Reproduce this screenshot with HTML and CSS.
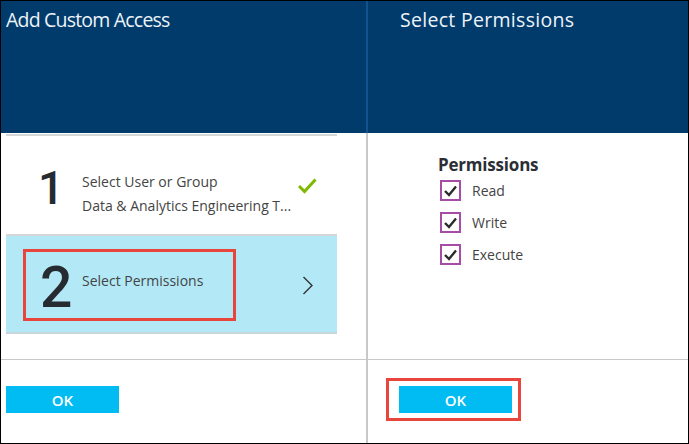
FILE: index.html
```html
<!DOCTYPE html>
<html>
<head>
<meta charset="utf-8">
<link rel="stylesheet" href="styles.css">
</head>
<body>
<div class="frame">
  <section class="panel panel-left">
    <header class="header header-left">Add Custom Access</header>
    <div class="body body-left">
      <div class="step step-1">
        <div class="num num-1">1</div>
        <div class="step-text">
          <div class="line">Select User or Group</div>
          <div class="line">Data &amp; Analytics Engineering T...</div>
        </div>
        <svg class="check" width="20" height="16" viewBox="0 0 20 16"><polyline points="1,8 6.5,13.5 17.5,1.5" fill="none" stroke="#7fba00" stroke-width="3"/></svg>
      </div>
      <div class="step step-2">
        <div class="num num-2">2</div>
        <div class="step-text">
          <div class="line">Select Permissions</div>
        </div>
        <svg class="chev" width="12" height="20" viewBox="0 0 12 20"><polyline points="1.5,1 10,9.5 1.5,18" fill="none" stroke="#333" stroke-width="1.4"/></svg>
        <div class="annot annot-step"></div>
      </div>
    </div>
    <footer class="footer footer-left">
      <button class="ok">OK</button>
    </footer>
  </section>
  <section class="panel panel-right">
    <header class="header header-right">Select Permissions</header>
    <div class="body body-right">
      <div class="perm-title">Permissions</div>
      <label class="perm"><span class="box"><svg width="17" height="17" viewBox="0 0 17 17"><polyline points="3,9 7,13 14,4.5" fill="none" stroke="#2b2b2b" stroke-width="2.4"/></svg></span>Read</label>
      <label class="perm"><span class="box"><svg width="17" height="17" viewBox="0 0 17 17"><polyline points="3,9 7,13 14,4.5" fill="none" stroke="#2b2b2b" stroke-width="2.4"/></svg></span>Write</label>
      <label class="perm"><span class="box"><svg width="17" height="17" viewBox="0 0 17 17"><polyline points="3,9 7,13 14,4.5" fill="none" stroke="#2b2b2b" stroke-width="2.4"/></svg></span>Execute</label>
    </div>
    <footer class="footer footer-right">
      <div class="annot-ok"><button class="ok">OK</button></div>
    </footer>
  </section>
</div>
</body>
</html>
```
FILE: styles.css
```css
* { box-sizing: border-box; }
html, body { margin: 0; padding: 0; background: #fff; }
body { font-family: "Open Sans", "Noto Sans", sans-serif; }

.frame {
  width: 689px;
  height: 444px;
  border: 1px solid #000;
  display: flex;
  overflow: hidden;
}

.panel { display: flex; flex-direction: column; }
.panel-left { width: 367px; }
.panel-right { flex: 1; }

.header {
  height: 132px;
  background: #003b6c;
  color: #eef3f8;
  font-size: 19.5px;
  line-height: 1;
  padding-top: 9px;
}
.header-left { padding-left: 5px; border-right: 2px solid #12528f; letter-spacing: -0.8px; }
.header-right { padding-left: 32px; letter-spacing: 0.3px; }

.body { height: 226px; }
.body-left {
  border-right: 2px solid #c8c8c8;
  padding: 1px 29px 0 5px;
}

.step {
  display: flex;
  align-items: center;
  position: relative;
  border-top: 2px solid #d6d6d6;
  color: #444;
}
.step-1 { height: 100px; padding-left: 32px; }
.step-2 {
  height: 100px;
  background: #b3e9f7;
  border-bottom: 2px solid #c6d6db;
  padding-left: 32px;
}

.num {
  color: #262b31;
  font-family: "Roboto", "Open Sans", sans-serif;
  font-weight: 500;
  line-height: 1;
}
.num-1 { font-size: 46px; width: 44px; margin-top: 6px; }
.num-2 { font-size: 57px; width: 44px; margin-top: 6px; margin-left: 2px; }

.step-text { font-size: 14px; line-height: 24px; }
.step-1 .step-text { margin-top: 18px; }
.step-2 .step-text { margin-top: -6px; margin-left: -2px; }

.check { margin-left: 7px; margin-top: 2px; }
.chev { position: absolute; left: 296px; top: 40px; }

.annot-step {
  position: absolute;
  left: 17px;
  top: 13px;
  width: 213px;
  height: 72px;
  border: 3px solid #e8463d;
}

.footer {
  flex: 1;
  border-top: 1px solid #c8c8c8;
}
.footer-left { border-right: 2px solid #c8c8c8; padding: 26px 0 0 5px; }
.footer-right { padding: 18px 0 0 18px; }

.ok {
  display: block;
  width: 113px;
  height: 27px;
  border: 0;
  margin: 0;
  padding: 0;
  background: #00bcf2;
  color: #fff;
  font-family: "Open Sans", sans-serif;
  font-weight: 600;
  font-size: 15px;
}
.annot-ok {
  width: 135px;
  height: 43px;
  border: 3px solid #e8463d;
  padding: 5px 0 0 10px;
}

.body-right { padding: 23px 0 0 70px; color: #444; }
.perm-title {
  font-size: 17px;
  font-weight: 700;
  color: #2b2f35;
  line-height: 18px;
  letter-spacing: -0.2px;
}
.perm {
  display: flex;
  align-items: center;
  height: 32px;
  font-size: 14px;
  padding-left: 2px;
}
.box {
  width: 21px;
  height: 21px;
  border: 2px solid #a64ca6;
  background: #fff;
  margin-right: 11px;
  display: flex;
  align-items: center;
  justify-content: center;
}
.box svg { display: block; }
```
